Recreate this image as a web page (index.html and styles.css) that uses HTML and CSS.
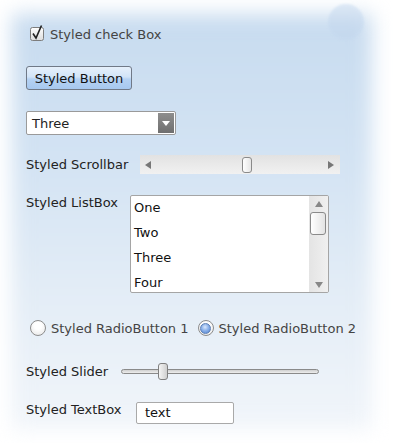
FILE: index.html
```html
<!DOCTYPE html>
<html lang="en">
<head>
    <meta charset="UTF-8">
    <title>Styled Controls</title>
    <link rel="stylesheet" href="styles.css">
</head>
<body>
    <div class="painel">
        <div class="conteudo">
            <!-- checkbox -->
            <div class="linha checkrow">
                <svg class="check" width="15" height="17" viewBox="0 0 15 17">
                    <defs>
                        <linearGradient id="gc" x1="0" y1="0" x2="0" y2="1">
                            <stop offset="0" stop-color="#ffffff"/>
                            <stop offset="1" stop-color="#dcdcdc"/>
                        </linearGradient>
                    </defs>
                    <rect x="0.5" y="3.5" width="13" height="13" rx="2" fill="url(#gc)" stroke="#7d7d7d"/>
                    <path d="M3 9.5 L6 14 L11.5 1.5" fill="none" stroke="#222" stroke-width="1.6"/>
                </svg>
                <span class="texto">Styled check Box</span>
            </div>

            <button class="botao">Styled Button</button>

            <div class="combo">
                <span>Three</span>
                <div class="combo-seta">
                    <svg width="8" height="5" viewBox="0 0 8 5"><path d="M0 0 L8 0 L4 5 Z" fill="#fff"/></svg>
                </div>
            </div>

            <div class="linha scrollrow">
                <span class="rotulo l-scroll">Styled Scrollbar</span>
                <div class="hscroll">
                    <svg width="6" height="8" viewBox="0 0 6 8"><path d="M6 0 L6 8 L0 4 Z" fill="#777"/></svg>
                    <div class="hscroll-trilha"><div class="hscroll-thumb"></div></div>
                    <svg width="6" height="8" viewBox="0 0 6 8"><path d="M0 0 L0 8 L6 4 Z" fill="#777"/></svg>
                </div>
            </div>

            <div class="linha listrow">
                <span class="rotulo l-list">Styled ListBox</span>
                <div class="lista">
                    <ul>
                        <li>One</li>
                        <li>Two</li>
                        <li>Three</li>
                        <li>Four</li>
                    </ul>
                    <div class="vscroll">
                        <svg width="8" height="6" viewBox="0 0 8 6"><path d="M0 6 L8 6 L4 0 Z" fill="#888"/></svg>
                        <div class="vscroll-trilha"><div class="vscroll-thumb"></div></div>
                        <svg width="8" height="6" viewBox="0 0 8 6"><path d="M0 0 L8 0 L4 6 Z" fill="#888"/></svg>
                    </div>
                </div>
            </div>

            <div class="linha radiorow">
                <span class="radio"></span>
                <span class="texto">Styled RadioButton 1</span>
                <span class="radio marcado"><span class="ponto"></span></span>
                <span class="texto">Styled RadioButton 2</span>
            </div>

            <div class="linha sliderrow">
                <span class="rotulo l-slider">Styled Slider</span>
                <div class="slider">
                    <div class="slider-trilha"></div>
                    <div class="slider-thumb"></div>
                </div>
            </div>

            <div class="linha textrow">
                <span class="rotulo l-text">Styled TextBox</span>
                <div class="caixa">text</div>
            </div>
        </div>
    </div>
</body>
</html>
```

FILE: styles.css
```css
*{
    margin: 0;
    padding: 0;
    box-sizing: border-box;
}
body{
    background: #ffffff;
    font-family: "DejaVu Sans", Verdana, sans-serif;
    font-size: 13px;
    color: #222;
    width: 396px;
    height: 443px;
    overflow: hidden;
}
.painel{
    position: relative;
    display: flow-root; /* evita o colapso da margem */
    width: 396px;
    height: 443px;
}
/* fundo borrado do painel */
.painel::before{
    content: "";
    position: absolute;
    left: 12px;
    top: 14px;
    width: 360px;
    height: 415px;
    background: linear-gradient(180deg, #c7dbef 0%, #d3e3f3 35%, #e2ecf6 65%, #f1f5fa 100%);
    filter: blur(10px);
}
/* bolinha no canto */
.painel::after{
    content: "";
    position: absolute;
    left: 328px;
    top: 4px;
    width: 36px;
    height: 36px;
    border-radius: 50%;
    background: #c3d7ee;
    filter: blur(1px);
    opacity: 0.5;
}
.conteudo{
    position: relative;
    z-index: 1;
    padding: 0 0 0 26px;
}
.linha{
    display: flex;
    align-items: center;
}
.texto{
    color: #444;
    font-size: 13px;
}
.rotulo{
    color: #222;
    font-size: 13px;
    flex-shrink: 0;
}
.l-scroll{ width: 114px; }
.l-list{ width: 104px; }
.l-slider{ width: 95px; }
.l-text{ width: 110px; }

.checkrow{
    margin-top: 24px;
    margin-left: 4px;
    height: 17px;
}
.check{
    margin-right: 5px;
}
.checkrow .texto{
    padding-top: 3px;
}

.botao{
    display: block;
    margin-top: 25px;
    width: 106px;
    height: 24px;
    border: 1px solid #707987;
    border-radius: 3px;
    background: linear-gradient(180deg, #e6f0fb 0%, #d2e4f8 45%, #b5d2f3 55%, #a7c8ef 100%);
    font-family: "DejaVu Sans", Verdana, sans-serif;
    font-size: 13px;
    color: #111;
}

.combo{
    display: flex;
    align-items: center;
    justify-content: space-between;
    margin-top: 21px;
    width: 150px;
    height: 24px;
    border: 1px solid #9a9a9a;
    border-radius: 2px;
    background: #fff;
    padding-left: 5px;
    font-size: 13px;
}
.combo-seta{
    width: 16px;
    height: 20px;
    margin-right: 1px;
    background: linear-gradient(180deg, #8e8e8e, #6f6f6f);
    display: flex;
    align-items: center;
    justify-content: center;
}

.scrollrow{
    margin-top: 20px;
    height: 19px;
}
.hscroll{
    width: 200px;
    height: 19px;
    background: linear-gradient(180deg, #e2e2e2, #f1f1f1);
    display: flex;
    align-items: center;
    padding: 0 6px 0 5px;
}
.hscroll-trilha{
    flex: 1;
    height: 19px;
    position: relative;
}
.hscroll-thumb{
    position: absolute;
    left: 91px;
    top: 2px;
    width: 10px;
    height: 16px;
    border: 1px solid #8a8a8a;
    border-radius: 3px;
    background: linear-gradient(90deg, #ffffff, #e6e6e6);
}

.listrow{
    margin-top: 21px;
    align-items: flex-start;
}
.lista{
    width: 199px;
    height: 98px;
    border: 1px solid #a5a5a5;
    border-radius: 2px;
    background: #fff;
    display: flex;
    overflow: hidden;
}
.lista ul{
    list-style: none;
    flex: 1;
    padding: 2px 0 0 3px;
}
.lista li{
    height: 25px;
    line-height: 19px;
    font-size: 13px;
    color: #111;
}
.vscroll{
    width: 19px;
    background: linear-gradient(90deg, #e4e4e4, #f0f0f0);
    display: flex;
    flex-direction: column;
    align-items: center;
    padding: 5px 0 4px;
}
.vscroll-trilha{
    flex: 1;
    width: 100%;
    position: relative;
}
.vscroll-thumb{
    position: absolute;
    top: 5px;
    left: 1px;
    width: 16px;
    height: 23px;
    border: 1px solid #8a8a8a;
    border-radius: 3px;
    background: linear-gradient(90deg, #ffffff, #e3e3e3);
}

.radiorow{
    margin-top: 27px;
    margin-left: 4px;
    height: 16px;
}
.radio{
    width: 16px;
    height: 16px;
    border-radius: 50%;
    border: 1px solid #8c8c8c;
    background: radial-gradient(circle at 50% 35%, #ffffff 30%, #e4e4e4 100%);
    display: flex;
    align-items: center;
    justify-content: center;
    margin-right: 5px;
    flex-shrink: 0;
}
.radio.marcado{
    margin-left: 9px;
}
.ponto{
    width: 11px;
    height: 11px;
    border-radius: 50%;
    border: 1px solid #5c7fb4;
    background: radial-gradient(circle at 45% 35%, #d9e7fb 0%, #8cb2ea 45%, #4d7fd0 100%);
}

.sliderrow{
    margin-top: 27px;
    height: 17px;
}
.slider{
    position: relative;
    width: 198px;
    height: 17px;
    display: flex;
    align-items: center;
}
.slider-trilha{
    width: 100%;
    height: 5px;
    border: 1px solid #8a8a8a;
    border-radius: 3px;
    background: linear-gradient(180deg, #cfcfcf, #eeeeee);
}
.slider-thumb{
    position: absolute;
    left: 37px;
    top: 0;
    width: 10px;
    height: 17px;
    border: 1px solid #7f7f7f;
    border-radius: 3px;
    background: linear-gradient(90deg, #f4f4f4, #cfcfcf);
}

.textrow{
    margin-top: 22px;
    align-items: flex-start;
}
.caixa{
    width: 98px;
    height: 22px;
    border: 1px solid #a9a9a9;
    border-radius: 2px;
    background: #fff;
    padding: 2px 0 0 8px;
    font-size: 13px;
    color: #111;
}
```
